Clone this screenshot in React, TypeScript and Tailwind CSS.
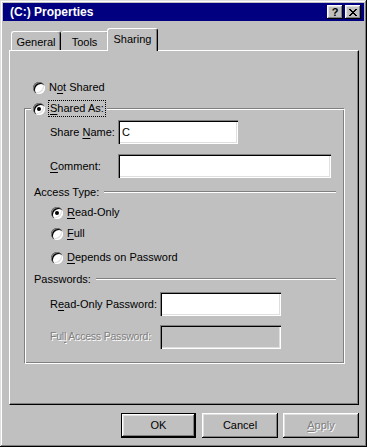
import React from "react";

const raised =
  "shadow-[inset_-1px_-1px_#000,inset_1px_1px_#fff,inset_-2px_-2px_#808080,inset_2px_2px_#dfdfdf]";
const sunken =
  "shadow-[inset_1px_1px_#808080,inset_2px_2px_#000,inset_-1px_-1px_#fff,inset_-2px_-2px_#dfdfdf]";
const disabledText = "text-[#808080] [text-shadow:1px_1px_0_#fff]";

function Radio({ checked }: { checked?: boolean }) {
  return (
    <span
      className={`w-[12px] h-[12px] rounded-full bg-white flex items-center justify-center shrink-0 ${sunken}`}
    >
      {checked && <span className="w-[4px] h-[4px] rounded-full bg-black" />}
    </span>
  );
}

function U({ children }: { children: React.ReactNode }) {
  return <span className="underline underline-offset-[2px]">{children}</span>;
}

function TextBox({
  width,
  value,
  disabled,
}: {
  width: string;
  value?: string;
  disabled?: boolean;
}) {
  return (
    <div
      className={`${width} h-[24px] flex items-center pl-[4px] shrink-0 ${
        disabled ? "bg-[#c0c0c0]" : "bg-white"
      } ${sunken}`}
    >
      {value}
    </div>
  );
}

function Separator({ label }: { label: string }) {
  return (
    <div className="flex items-center h-[12px] pl-[9px] pr-[8px]">
      <span className="leading-[12px] whitespace-nowrap">{label}</span>
      <div className="flex-1 ml-[5px] h-[2px] border-t border-t-[#808080] border-b border-b-white" />
    </div>
  );
}

function Button({
  children,
  width,
  isDefault,
  disabled,
}: {
  children: React.ReactNode;
  width: string;
  isDefault?: boolean;
  disabled?: boolean;
}) {
  return (
    <button
      className={`${width} h-[25px] flex items-center justify-center bg-[#c0c0c0] ${raised} ${
        isDefault ? "border border-black" : ""
      } ${disabled ? disabledText : "text-black"}`}
    >
      {children}
    </button>
  );
}

export default function App() {
  return (
    <div
      className={`w-[367px] h-[447px] bg-[#c0c0c0] p-[3px] flex flex-col text-[11px] text-black font-['Liberation_Sans',Arial,sans-serif] shadow-[inset_-1px_-1px_#000,inset_1px_1px_#dfdfdf,inset_-2px_-2px_#808080,inset_2px_2px_#fff]`}
    >
      {/* title bar */}
      <div className="h-[18px] bg-[#000080] flex items-center justify-between pl-[7px] pr-[3px]">
        <span className="text-white font-bold text-[12px]">(C:) Properties</span>
        <div className="flex gap-[2px]">
          <div className={`w-[16px] h-[14px] bg-[#c0c0c0] flex items-center justify-center font-bold text-[11px] leading-none ${raised}`}>
            ?
          </div>
          <div className={`w-[16px] h-[14px] bg-[#c0c0c0] flex items-center justify-center ${raised}`}>
            <svg width="8" height="7" viewBox="0 0 8 7" shapeRendering="crispEdges">
              <path d="M0 0h2v1H0zM6 0h2v1H6zM1 1h2v1H1zM5 1h2v1H5zM2 2h4v1H2zM3 3h2v1H3zM2 4h4v1H2zM1 5h2v1H1zM5 5h2v1H5zM0 6h2v1H0zM6 6h2v1H6z" fill="#000" />
            </svg>
          </div>
        </div>
      </div>

      <div className="pl-[6px] mt-[7px] flex flex-col">
        {/* tabs */}
        <div className="flex items-end h-[22px] pl-[2px]">
          <div className="w-[50px] h-[19px] border-t border-l border-white border-r border-r-black rounded-t-[3px] shadow-[inset_-1px_0_#808080] flex justify-center pt-[4px] leading-[13px]">
            General
          </div>
          <div className="w-[48px] h-[19px] border-t border-white border-r border-r-black rounded-t-[3px] shadow-[inset_-1px_0_#808080] flex justify-center pt-[4px] leading-[13px]">
            Tools
          </div>
          <div className="relative z-10 -ml-[2px] -mb-[1px] w-[51px] h-[23px] bg-[#c0c0c0] border-t border-l border-white border-r border-r-black rounded-t-[3px] shadow-[inset_-1px_0_#808080] flex justify-center pt-[4px] leading-[13px]">
            Sharing
          </div>
        </div>

        {/* panel */}
        <div className="w-[350px] h-[355px] border border-t-white border-l-white border-r-black border-b-black shadow-[inset_-1px_-1px_#808080] flex flex-col">
          <div className="mt-[30px] ml-[23px] h-[13px] flex items-center gap-[4px]">
            <Radio />
            <span>
              N<U>o</U>t Shared
            </span>
          </div>

          <div className="relative mt-[14px] ml-[14px] w-[321px] h-[256px] border border-t-[#808080] border-l-[#808080] border-r-white border-b-white shadow-[inset_1px_1px_#fff,inset_-1px_-1px_#808080] flex flex-col">
            <div className="absolute left-[6px] top-[-9px] h-[17px] flex items-center gap-[3px] bg-[#c0c0c0] pl-[2px] pr-[1px]">
              <Radio checked />
              <span className="border border-dotted border-black px-[1px] leading-[15px]">
                <U>S</U>hared As:
              </span>
            </div>

            <div className="mt-[11px] pl-[25px] flex items-center">
              <span className="w-[68px] whitespace-nowrap">
                Share <U>N</U>ame:
              </span>
              <TextBox width="w-[120px]" value="C" />
            </div>
            <div className="mt-[10px] pl-[25px] flex items-center">
              <span className="w-[68px] whitespace-nowrap">
                <U>C</U>omment:
              </span>
              <TextBox width="w-[213px]" />
            </div>

            <div className="mt-[8px]">
              <Separator label="Access Type:" />
            </div>

            <div className="mt-[8px] pl-[26px] h-[13px] flex items-center gap-[4px]">
              <Radio checked />
              <span>
                <U>R</U>ead-Only
              </span>
            </div>
            <div className="mt-[8px] pl-[26px] h-[13px] flex items-center gap-[4px]">
              <Radio />
              <span>
                <U>F</U>ull
              </span>
            </div>
            <div className="mt-[11px] pl-[26px] h-[13px] flex items-center gap-[4px]">
              <Radio />
              <span>
                <U>D</U>epends on Password
              </span>
            </div>

            <div className="mt-[9px]">
              <Separator label="Passwords:" />
            </div>

            <div className="mt-[7px] pl-[25px] flex items-center">
              <span className="w-[110px] whitespace-nowrap">
                R<U>e</U>ad-Only Password:
              </span>
              <TextBox width="w-[121px]" />
            </div>
            <div className="mt-[9px] pl-[25px] flex items-center">
              <span className={`w-[110px] whitespace-nowrap text-[10.5px] tracking-[-0.2px] ${disabledText}`}>
                Ful<U>l</U> Access Password:
              </span>
              <TextBox width="w-[121px]" disabled />
            </div>
          </div>
        </div>

        {/* buttons */}
        <div className="w-[350px] mt-[8px] flex justify-end">
          <Button width="w-[75px] mr-[6px]" isDefault>
            OK
          </Button>
          <Button width="w-[76px] mr-[5px]">Cancel</Button>
          <Button width="w-[76px]" disabled>
            <U>A</U>pply
          </Button>
        </div>
      </div>
    </div>
  );
}
